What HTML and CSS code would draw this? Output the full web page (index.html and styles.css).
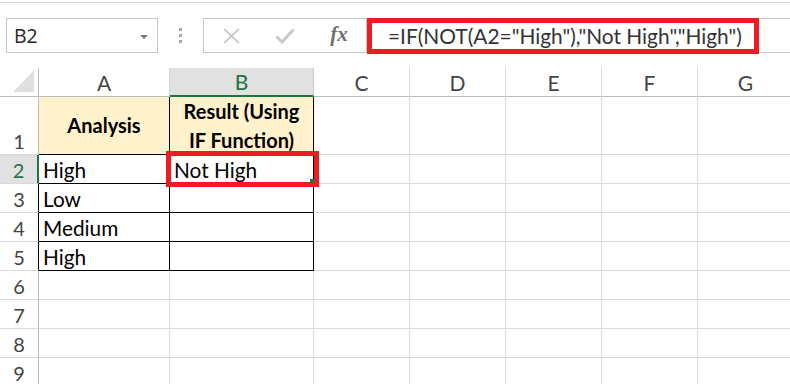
FILE: index.html
```html
<!DOCTYPE html>
<html lang="en">
<head>
    <meta charset="UTF-8">
    <title>IF NOT example</title>
    <link rel="stylesheet" href="styles.css">
</head>
<body>
    <div class="ribbon-edge"></div>

    <div class="formula-row">
        <div class="name-box">
            <span>B2</span>
            <span class="caret"></span>
        </div>
        <div class="grip"><i></i><i></i><i></i></div>
        <div class="fx-tools">
            <span class="tool">
                <svg width="17" height="16" viewBox="0 0 17 16"><path d="M1 1 L16 15 M16 1 L1 15" stroke="#bdbdbd" stroke-width="1.6" fill="none"/></svg>
            </span>
            <span class="tool">
                <svg width="20" height="16" viewBox="0 0 20 16"><path d="M1.5 8.5 L7 14 L18.5 1.5" stroke="#c8c8c8" stroke-width="3" fill="none"/></svg>
            </span>
            <span class="tool fx">fx</span>
        </div>
        <div class="formula-input">
            <span class="formula-text">=IF(NOT(A2="High"),"Not High","High")</span>
            <div class="highlight formula-mark"></div>
        </div>
    </div>

    <div class="sheet">
        <!-- column headers -->
        <div class="corner">
            <svg width="22" height="23" viewBox="0 0 22 23"><path d="M21 0 L21 22 L0 22 Z" fill="#dfdfdf"/></svg>
        </div>
        <div class="col-head">A</div>
        <div class="col-head sel">B</div>
        <div class="col-head">C</div>
        <div class="col-head">D</div>
        <div class="col-head">E</div>
        <div class="col-head">F</div>
        <div class="col-head">G</div>

        <!-- row 1 -->
        <div class="row-head">1</div>
        <div class="cell boxed title">Analysis</div>
        <div class="cell boxed title">Result (Using<br>IF Function)</div>
        <div class="cell"></div><div class="cell"></div><div class="cell"></div><div class="cell"></div><div class="cell"></div>

        <!-- row 2 -->
        <div class="row-head sel">2</div>
        <div class="cell boxed">High</div>
        <div class="cell boxed active">Not High
            <div class="highlight cell-mark"><span class="fill-handle"></span></div>
        </div>
        <div class="cell"></div><div class="cell"></div><div class="cell"></div><div class="cell"></div><div class="cell"></div>

        <!-- row 3 -->
        <div class="row-head edge">3</div>
        <div class="cell boxed">Low</div>
        <div class="cell boxed"></div>
        <div class="cell"></div><div class="cell"></div><div class="cell"></div><div class="cell"></div><div class="cell"></div>

        <!-- row 4 -->
        <div class="row-head edge">4</div>
        <div class="cell boxed">Medium</div>
        <div class="cell boxed"></div>
        <div class="cell"></div><div class="cell"></div><div class="cell"></div><div class="cell"></div><div class="cell"></div>

        <!-- row 5 -->
        <div class="row-head edge">5</div>
        <div class="cell boxed">High</div>
        <div class="cell boxed"></div>
        <div class="cell"></div><div class="cell"></div><div class="cell"></div><div class="cell"></div><div class="cell"></div>

        <!-- rows 6-9 -->
        <div class="row-head">6</div>
        <div class="cell"></div><div class="cell"></div><div class="cell"></div><div class="cell"></div><div class="cell"></div><div class="cell"></div><div class="cell"></div>
        <div class="row-head">7</div>
        <div class="cell"></div><div class="cell"></div><div class="cell"></div><div class="cell"></div><div class="cell"></div><div class="cell"></div><div class="cell"></div>
        <div class="row-head">8</div>
        <div class="cell"></div><div class="cell"></div><div class="cell"></div><div class="cell"></div><div class="cell"></div><div class="cell"></div><div class="cell"></div>
        <div class="row-head">9</div>
        <div class="cell"></div><div class="cell"></div><div class="cell"></div><div class="cell"></div><div class="cell"></div><div class="cell"></div><div class="cell"></div>
    </div>
</body>
</html>
```

FILE: styles.css
```css
:root {
    --grid-line: #d9d9d9;
    --head-line: #bcbcbc;
    --box-line: #c6c6c6;
    --excel-green: #217346;
    --mark-red: #ed1c24;
    --head-text: #444;
}

* {
    margin: 0;
    padding: 0;
    box-sizing: border-box;
}

body {
    width: 790px;
    height: 384px;
    overflow: hidden;
    background-color: white;
    font-family: Lato, 'Liberation Sans', sans-serif;
    color: #000;
}

.ribbon-edge {
    height: 3px;
    border-bottom: 1px solid #d6d6d6;
}

/* formula bar */

.formula-row {
    display: flex;
    height: 35px;
    margin-top: 15px;
    padding-left: 6px;
}

.name-box {
    width: 152px;
    border: 1px solid var(--box-line);
    display: flex;
    align-items: center;
    justify-content: space-between;
    padding: 0 9px 0 7px;
    font-family: 'Open Sans', sans-serif;
    font-size: 19.5px;
    color: #262626;
}

.caret {
    width: 0;
    height: 0;
    border-left: 4px solid transparent;
    border-right: 4px solid transparent;
    border-top: 4px solid #7a7a7a;
    margin-top: 2px;
}

.grip {
    width: 45px;
    display: flex;
    flex-direction: column;
    align-items: center;
    justify-content: center;
    gap: 3px;
    padding-right: 1px;
}

.grip i {
    display: block;
    width: 3px;
    height: 3px;
    background-color: #a9a9a9;
}

.fx-tools {
    width: 164px;
    border: 1px solid var(--box-line);
    display: flex;
}

.tool {
    flex: 1;
    display: flex;
    align-items: center;
    justify-content: center;
}

.fx {
    font-family: 'Liberation Serif', serif;
    font-style: italic;
    font-weight: bold;
    font-size: 21px;
    color: #6e6e6e;
    padding-bottom: 2px;
}

.formula-input {
    flex: 1;
    position: relative;
    border-top: 1px solid var(--box-line);
    border-bottom: 1px solid var(--box-line);
    display: flex;
    align-items: center;
    padding-left: 21px;
}

.formula-text {
    font-size: 20.9px;
    color: #333;
    white-space: nowrap;
}

.highlight {
    position: absolute;
    border: 5px solid var(--mark-red);
}

.formula-mark {
    left: 0;
    top: -1px;
    width: 392px;
    height: 36px;
}

/* sheet grid */

.sheet {
    margin-top: 15px;
    display: grid;
    grid-template-columns: 39px 131px 144px 96px 96px 96px 96px 96px;
    grid-template-rows: 29px 58px repeat(8, 29px);
    width: 794px;
}

.corner {
    border-right: 1px solid var(--head-line);
    border-bottom: 1px solid var(--head-line);
    display: flex;
    align-items: flex-end;
    justify-content: flex-end;
    padding: 0 3px 3px 0;
}

.col-head {
    border-right: 1px solid var(--grid-line);
    border-bottom: 1px solid var(--head-line);
    display: flex;
    align-items: center;
    justify-content: center;
    font-size: 21px;
    color: var(--head-text);
}

.col-head.sel {
    background-color: #e1e1e1;
    color: var(--excel-green);
    border-bottom: 2px solid var(--excel-green);
    border-right-color: #c8c8c8;
}

.row-head {
    border-right: 1px solid var(--head-line);
    border-bottom: 1px solid var(--grid-line);
    display: flex;
    align-items: flex-end;
    justify-content: center;
    padding-bottom: 2px;
    font-size: 20px;
    line-height: 22px;
    color: var(--head-text);
}

.row-head.sel {
    background-color: #e1e1e1;
    color: var(--excel-green);
    border-right: 2px solid var(--excel-green);
}

.row-head.edge {
    border-right-color: #000;
}

.cell {
    border-right: 1px solid var(--grid-line);
    border-bottom: 1px solid var(--grid-line);
    display: flex;
    align-items: flex-end;
    padding: 0 0 2px 4px;
    font-size: 20.8px;
    line-height: 22px;
    white-space: nowrap;
}

.cell.boxed {
    border-right-color: #000;
    border-bottom-color: #000;
}

.cell.title {
    background-color: #fff2cc;
    font-size: 20px;
    font-weight: bold;
    align-items: center;
    justify-content: center;
    text-align: center;
    line-height: 29px;
    padding: 0;
}

.cell.active {
    position: relative;
}

.cell-mark {
    left: -4px;
    top: -4px;
    width: 153px;
    height: 36px;
}

.fill-handle {
    position: absolute;
    right: 0;
    bottom: -1px;
    width: 4px;
    height: 4px;
    background-color: var(--excel-green);
}
```
